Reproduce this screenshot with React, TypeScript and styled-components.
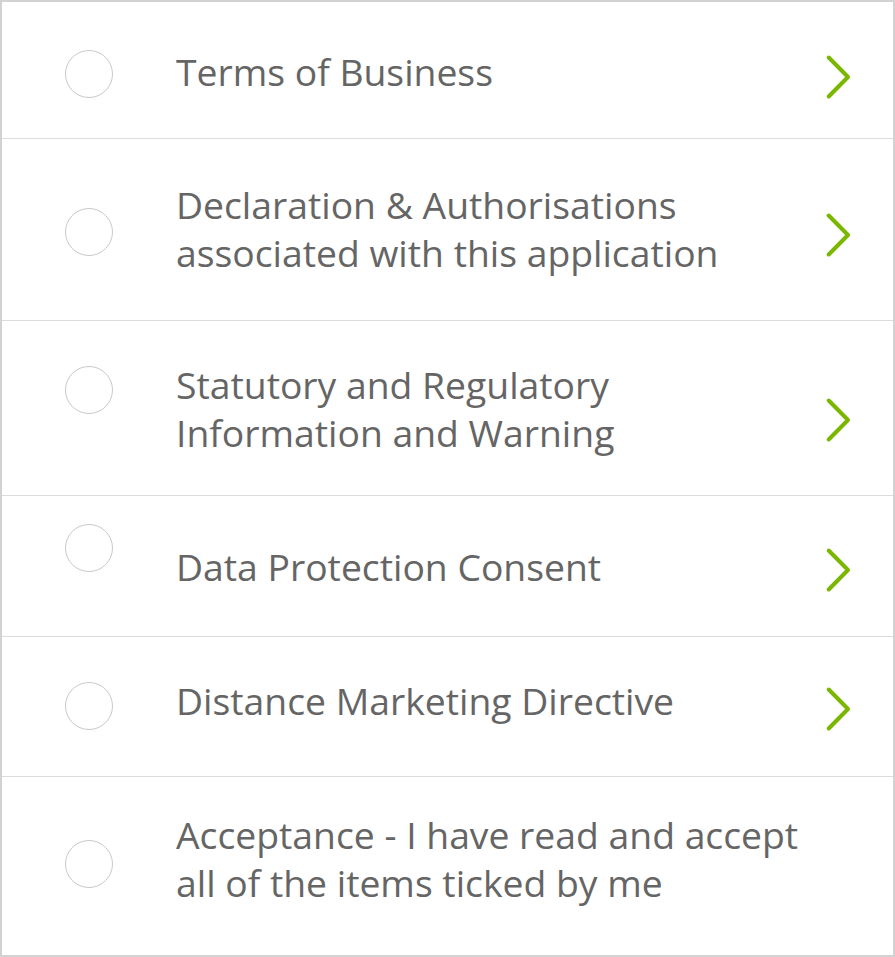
import React from "react";
import styled, { createGlobalStyle } from "styled-components";

const Global = createGlobalStyle`
  html, body { margin: 0; padding: 0; background: #ffffff; }
  body { font-family: "Open Sans", "Noto Sans", sans-serif; }
`;

const List = styled.div`
  box-sizing: border-box;
  width: 895px;
  height: 957px;
  border: 2px solid #d2d2d2;
  display: flex;
  flex-direction: column;
`;

const Row = styled.div<{ $h: number; $last?: boolean }>`
  box-sizing: content-box;
  height: ${(p) => p.$h}px;
  border-bottom: ${(p) => (p.$last ? "none" : "1px solid #dcdcdc")};
  display: grid;
  grid-template-columns: 48px 1fr 30px;
  column-gap: 0;
  padding: 0 40px 0 63px;
  align-items: start;
`;

const Circle = styled.span<{ $top: number }>`
  box-sizing: border-box;
  display: block;
  width: 48px;
  height: 48px;
  border-radius: 50%;
  border: 1px solid #c9c9c9;
  background: #fff;
  margin-top: ${(p) => p.$top}px;
`;

const Label = styled.div<{ $top: number }>`
  margin: ${(p) => p.$top}px 0 0 63px;
  font-family: "Open Sans", "Noto Sans", sans-serif;
  font-size: 37.3px;
  line-height: 48px;
  color: #656565;
  white-space: nowrap;
`;

const ChevronBox = styled.span<{ $top: number }>`
  display: block;
  width: 30px;
  height: 48px;
  margin-top: ${(p) => p.$top}px;
`;

const Chevron = ({ top }: { top: number }) => (
  <ChevronBox $top={top}>
    <svg width="30" height="48" viewBox="0 0 30 48">
      <path
        d="M5.7 4.5 L25 24 L5.7 43.5"
        fill="none"
        stroke="#79b700"
        strokeWidth="4"
        strokeLinecap="round"
        strokeLinejoin="round"
      />
    </svg>
  </ChevronBox>
);

type Item = {
  lines: string[];
  h: number;
  textTop: number;
  circleTop: number;
  chevTop?: number;
};

const items: Item[] = [
  { lines: ["Terms of Business"], h: 136, textTop: 46, circleTop: 48, chevTop: 51 },
  {
    lines: ["Declaration & Authorisations", "associated with this application"],
    h: 181,
    textTop: 42,
    circleTop: 69,
    chevTop: 72,
  },
  {
    lines: ["Statutory and Regulatory", "Information and Warning"],
    h: 174,
    textTop: 40,
    circleTop: 45,
    chevTop: 75,
  },
  { lines: ["Data Protection Consent"], h: 140, textTop: 47, circleTop: 28, chevTop: 50 },
  { lines: ["Distance Marketing Directive"], h: 139, textTop: 40, circleTop: 45, chevTop: 48 },
  {
    lines: ["Acceptance - I have read and accept", "all of the items ticked by me"],
    h: 178,
    textTop: 34,
    circleTop: 63,
  },
];

export default function App() {
  return (
    <>
      <Global />
      <List>
        {items.map((it, i) => (
          <Row key={i} $h={it.h} $last={i === items.length - 1}>
            <Circle $top={it.circleTop} />
            <Label $top={it.textTop}>
              {it.lines.map((l, j) => (
                <React.Fragment key={j}>
                  {j > 0 && <br />}
                  {l}
                </React.Fragment>
              ))}
            </Label>
            {it.chevTop !== undefined ? <Chevron top={it.chevTop} /> : <span />}
          </Row>
        ))}
      </List>
    </>
  );
}
